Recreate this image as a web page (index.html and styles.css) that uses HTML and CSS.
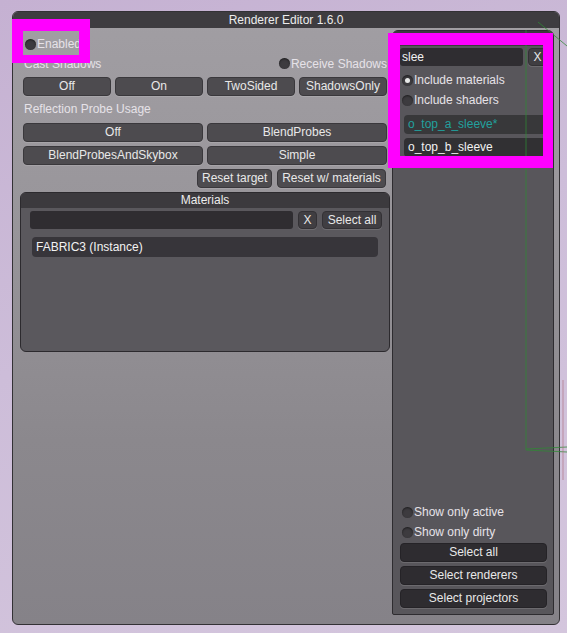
FILE: index.html
```html
<!DOCTYPE html>
<html lang="en">
<head>
    <meta charset="UTF-8">
    <meta name="viewport" content="width=device-width, initial-scale=1.0">
    <title>Renderer Editor 1.6.0</title>
    <link rel="stylesheet" href="styles.css">
</head>
<body>
    <div class="scene">
        <div class="window">
            <div class="titlebar">Renderer Editor 1.6.0</div>
            <div class="window-body">
                <div class="main-col">
                    <div class="toggle enabled-row"><span class="dot"></span>Enabled</div>
                    <div class="split-row">
                        <span class="label">Cast Shadows</span>
                        <span class="toggle"><span class="dot"></span>Receive Shadows</span>
                    </div>
                    <div class="btn-row">
                        <button class="btn">Off</button>
                        <button class="btn">On</button>
                        <button class="btn">TwoSided</button>
                        <button class="btn">ShadowsOnly</button>
                    </div>
                    <div class="label label-row">Reflection Probe Usage</div>
                    <div class="btn-row">
                        <button class="btn">Off</button>
                        <button class="btn">BlendProbes</button>
                    </div>
                    <div class="btn-row">
                        <button class="btn">BlendProbesAndSkybox</button>
                        <button class="btn">Simple</button>
                    </div>
                    <div class="btn-row reset-row">
                        <button class="btn">Reset target</button>
                        <button class="btn">Reset w/ materials</button>
                    </div>

                    <div class="materials">
                        <div class="box-title">Materials</div>
                        <div class="search-row">
                            <div class="field"></div>
                            <button class="btn small">X</button>
                            <button class="btn small wide">Select all</button>
                        </div>
                        <div class="list-item mat-item">FABRIC3 (Instance)</div>
                    </div>
                </div>

                <div class="target-panel">
                    <div class="box-title">Target</div>
                    <div class="search-row target-search">
                        <div class="field">slee</div>
                        <button class="btn small">X</button>
                    </div>
                    <div class="toggle target-toggle"><span class="dot on"></span>Include materials</div>
                    <div class="toggle target-toggle"><span class="dot"></span>Include shaders</div>
                    <div class="target-list">
                        <div class="list-item teal">o_top_a_sleeve*</div>
                        <div class="list-item">o_top_b_sleeve</div>
                    </div>
                    <div class="spacer"></div>
                    <div class="toggle target-toggle"><span class="dot"></span>Show only active</div>
                    <div class="toggle target-toggle"><span class="dot"></span>Show only dirty</div>
                    <div class="target-actions">
                        <button class="btn dark">Select all</button>
                        <button class="btn dark">Select renderers</button>
                        <button class="btn dark">Select projectors</button>
                    </div>
                </div>
            </div>
        </div>

        <!-- scene gizmo lines showing through the editor -->
        <svg class="scene-lines" width="567" height="633" viewBox="0 0 567 633">
            <polyline points="526,30 526,450 567,452" fill="none" stroke="#2f8a34" stroke-width="1" />
            <line x1="526" y1="449" x2="567" y2="447" stroke="#2f8a34" stroke-width="1" />
            <line x1="538" y1="22" x2="567" y2="46" stroke="#2f8a34" stroke-width="1" />
            <line x1="563" y1="380" x2="563" y2="480" stroke="#a04a55" stroke-width="1" opacity="0.6" />
        </svg>

        <div class="highlight hl-enabled"></div>
        <div class="highlight hl-target"></div>
    </div>
</body>
</html>
```

FILE: styles.css
```css
* {
    box-sizing: border-box;
}

body {
    margin: 0;
    font-family: "Liberation Sans", Arial, sans-serif;
    font-size: 12px;
    background: linear-gradient(160deg, #c5b1d2 0%, #cdbdd9 45%, #d4c6dd 100%);
}

.scene {
    position: relative;
    width: 567px;
    height: 633px;
    overflow: hidden;
    padding: 11px 0 0 12px;
}

.window {
    width: 548px;
    height: 614px;
    border: 1px solid #333135;
    border-radius: 6px;
    background: linear-gradient(180deg, #a19ea3 0%, #98959a 35%, #8b888d 70%, #858288 100%);
    display: flex;
    flex-direction: column;
    overflow: hidden;
}

.titlebar {
    height: 16px;
    line-height: 17px;
    flex-shrink: 0;
    background: #3e3c40;
    color: #ececec;
    text-align: center;
}

.window-body {
    flex: 1;
    display: flex;
    gap: 2px;
    padding: 2px 4px 9px 7px;
}

.main-col {
    width: 370px;
    display: flex;
    flex-direction: column;
    padding-top: 4px;
}

.label {
    color: #e6e2e8;
}

.toggle {
    display: flex;
    align-items: center;
    height: 20px;
    color: #e6e2e8;
}

.dot {
    width: 11px;
    height: 11px;
    border-radius: 50%;
    background: #3d3b3f;
    box-shadow: inset 0 1px 2px rgba(0, 0, 0, 0.5);
    margin-right: 1px;
    flex-shrink: 0;
    position: relative;
}

.dot.on::after {
    content: "";
    position: absolute;
    left: 3px;
    top: 3px;
    width: 5px;
    height: 5px;
    border-radius: 50%;
    background: #e8e8e8;
}

.enabled-row {
    padding-left: 5px;
}

.split-row {
    height: 19px;
    display: flex;
    align-items: center;
    justify-content: space-between;
    padding: 0 3px 0 4px;
}

.label-row {
    height: 20px;
    line-height: 20px;
    margin-top: 3px;
    padding-left: 4px;
}

.btn-row {
    display: flex;
    gap: 4px;
    margin-top: 4px;
    padding: 0 3px;
}

.btn-row .btn {
    flex: 1;
}

.btn {
    height: 19px;
    padding: 0 4px;
    border: 1px solid #3a383c;
    border-radius: 4px;
    background: #4d4b4f;
    color: #e8e8e8;
    font-family: inherit;
    font-size: 12px;
    line-height: 17px;
    box-shadow: 0 1px 0 rgba(255, 255, 255, 0.12);
    white-space: nowrap;
}

.btn-row.reset-row {
    justify-content: flex-end;
    gap: 5px;
    padding-right: 4px;
}

.btn-row.reset-row .btn {
    flex: none;
}

.reset-row .btn:first-child {
    width: 75px;
}

.reset-row .btn:last-child {
    width: 109px;
}

.materials {
    margin-top: 4px;
    height: 160px;
    border: 1px solid #2c2a2e;
    border-radius: 6px;
    background: #5a585d;
    overflow: hidden;
}

.box-title {
    height: 15px;
    line-height: 15px;
    background: #3c3a3e;
    color: #ececec;
    text-align: center;
    flex-shrink: 0;
}

.search-row {
    display: flex;
    align-items: center;
    gap: 5px;
    margin-top: 3px;
    padding: 0 7px 0 9px;
}

.field {
    flex: 1;
    height: 18px;
    border-radius: 3px;
    background: #2f2d31;
    color: #f2f2f2;
    padding-left: 2px;
    line-height: 18px;
}

.btn.small {
    height: 18px;
    line-height: 16px;
    width: 19px;
    padding: 0;
    background: #403e42;
    border-color: #333135;
}

.btn.small.wide {
    width: 60px;
}

.list-item {
    height: 20px;
    line-height: 20px;
    border-radius: 4px;
    background: #37353a;
    color: #f2f2f2;
    padding-left: 4px;
    white-space: nowrap;
    overflow: hidden;
}

.mat-item {
    margin: 8px 11px 0 11px;
}

.target-panel {
    width: 162px;
    display: flex;
    flex-direction: column;
    border: 1px solid #2e2c30;
    border-radius: 6px 6px 2px 2px;
    background: #58565b;
    padding-bottom: 6px;
    overflow: hidden;
}

.target-search {
    margin-top: 2px;
    padding: 0 6px 0 7px;
}

.target-toggle {
    padding-left: 9px;
}

.target-search + .target-toggle {
    margin-top: 4px;
}

.target-list {
    display: flex;
    flex-direction: column;
    gap: 4px;
    margin: 5px 6px 0 11px;
}

.target-list .list-item {
    height: 19px;
    line-height: 19px;
    background: #313033;
}

.list-item.teal {
    color: #22a09e;
    background: #38383a;
}

.spacer {
    flex: 1;
}

.target-actions {
    display: flex;
    flex-direction: column;
    gap: 4px;
    margin-top: 1px;
    padding: 0 6px 0 7px;
}

.btn.dark {
    background: #2e2c30;
    border-color: #252327;
}

.scene-lines {
    position: absolute;
    left: 0;
    top: 0;
    pointer-events: none;
    opacity: 0.75;
}

.highlight {
    position: absolute;
    border-style: solid;
    border-color: #ff00ff;
    pointer-events: none;
}

.hl-enabled {
    left: 12px;
    top: 19px;
    width: 78px;
    height: 44px;
    border-width: 12px 11px 8px 11px;
}

.hl-target {
    left: 388px;
    top: 33px;
    width: 165px;
    height: 135px;
    border-width: 12px 10px 12px 12px;
}
```
